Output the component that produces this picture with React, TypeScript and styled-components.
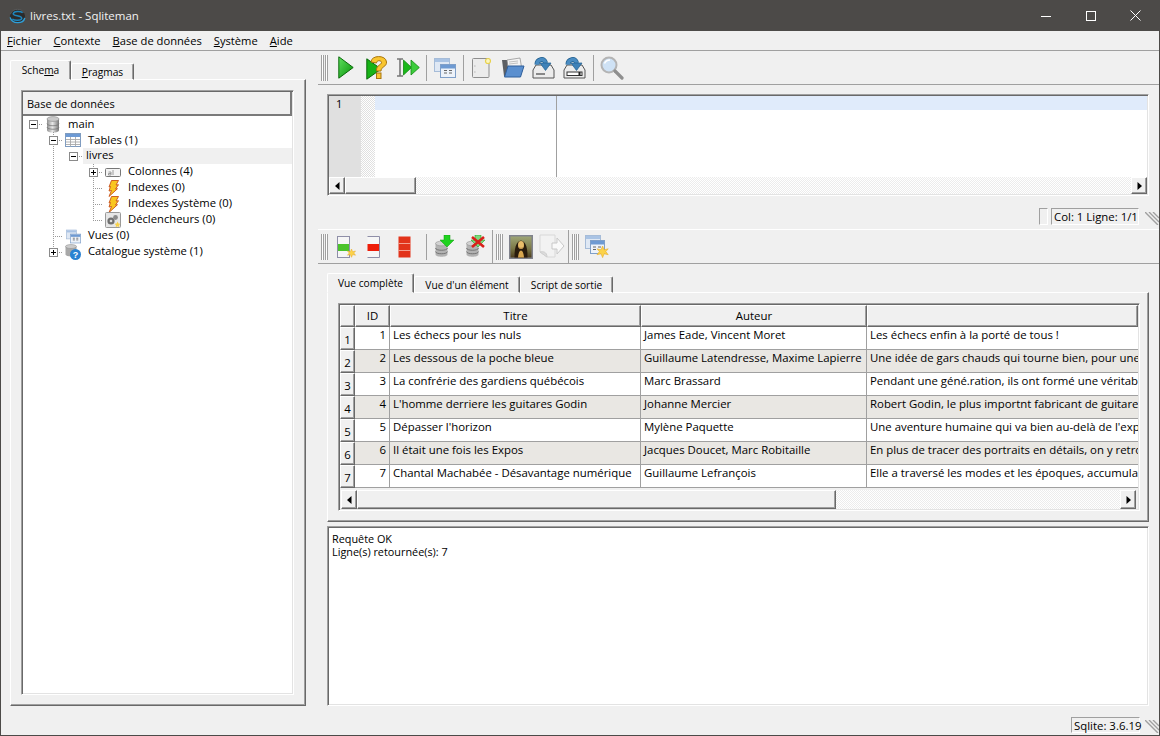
import React from 'react'
import styled, { createGlobalStyle } from 'styled-components'

const GlobalStyle = createGlobalStyle`
  html, body { margin: 0; padding: 0; background: #f0f0f0; }
  body { font-family: "Open Sans", "Noto Sans", "Liberation Sans", sans-serif; font-size: 11.4px; color: #000; }
`

const raised = `
  border: 1px solid;
  border-color: #fff #696969 #696969 #fff;
  box-shadow: inset -1px -1px 0 #a0a0a0;
`
const sunken = `
  border: 1px solid;
  border-color: #a0a0a0 #fff #fff #a0a0a0;
  box-shadow: inset 1px 1px 0 #696969, inset -1px -1px 0 #e3e3e3;
  padding: 1px;
`

const Window = styled.div`
  width: 1160px;
  height: 736px;
  box-sizing: border-box;
  border: 1px solid #4c4a48;
  border-top: 0;
  background: #f0f0f0;
  display: flex;
  flex-direction: column;
  overflow: hidden;
`
const TitleBar = styled.div`
  height: 31px;
  flex: none;
  margin: 0 -1px;
  background: #4c4a48;
  display: flex;
  align-items: center;
  padding: 0 2px 0 9px;
  color: #f2f2f2;
  font-size: 11.5px;
`
const TitleText = styled.span`
  flex: 1;
  margin-left: 4px;
`
const WinButton = styled.div`
  width: 45px;
  height: 31px;
  display: flex;
  align-items: center;
  justify-content: center;
`
const MenuBar = styled.div`
  height: 19px;
  flex: none;
  display: flex;
  align-items: center;
  gap: 12px;
  padding-left: 6px;
  border-bottom: 1px solid #a0a0a0;
  box-sizing: content-box;
  font-size: 11.2px;
`
const Main = styled.div`
  flex: 1;
  min-height: 0;
  display: grid;
  grid-template-columns: 317px 1fr;
`
const LeftColumn = styled.div`
  padding: 9px 12px 7px 9px;
  display: flex;
  flex-direction: column;
  min-height: 0;
`
const RightColumn = styled.div`
  display: flex;
  flex-direction: column;
  min-width: 0;
  padding-bottom: 7px;
`
const TabRow = styled.div`
  display: flex;
  height: 20px;
  flex: none;
  position: relative;
  z-index: 1;
  margin-bottom: -1px;
  align-items: flex-end;
`
const Tab = styled.div<{ $active?: boolean; $w: number }>`
  width: ${p => p.$w}px;
  height: ${p => (p.$active ? 20 : 17)}px;
  box-sizing: border-box;
  display: flex;
  align-items: center;
  justify-content: center;
  background: #f0f0f0;
  border: 1px solid;
  border-color: #fff #696969 ${p => (p.$active ? '#f0f0f0' : '#fff')} #fff;
  border-radius: 2px 2px 0 0;
  box-shadow: inset -1px 0 0 #a0a0a0;
  font-size: 10.2px;
`
const TabPane = styled.div`
  ${raised}
  flex: 1;
  min-height: 0;
  display: flex;
  flex-direction: column;
  background: #f0f0f0;
`
const TreePane = styled(TabPane)`
  padding: 10px 11px 10px 10px;
`
const TreeFrame = styled.div`
  ${sunken}
  flex: 1;
  min-height: 0;
  background: #fff;
`
const TreeHeader = styled.div`
  height: 24px;
  box-sizing: border-box;
  background: #f0f0f0;
  border-right: 2px solid #7a7a7a;
  border-bottom: 2px solid #7a7a7a;
  display: flex;
  align-items: center;
  padding-left: 4px;
  font-size: 11px;
`
const TreeRow = styled.div`
  height: 16px;
  display: flex;
  align-items: stretch;
`
const dots = (x: string, y: string, w: string, h: string, dir: string) =>
  `repeating-linear-gradient(${dir}, #9a9a9a 0 1px, transparent 1px 2px) ${x} ${y} / ${w} ${h} no-repeat`

const guideBg: Record<string, string> = {
  none: 'none',
  pipe: dots('10px', '0', '1px', '100%', 'to bottom'),
  tee: `${dots('10px', '0', '1px', '100%', 'to bottom')}, ${dots('10px', '8px', '10px', '1px', 'to right')}`,
  end: `${dots('10px', '0', '1px', '9px', 'to bottom')}, ${dots('10px', '8px', '10px', '1px', 'to right')}`,
  root: `${dots('10px', '8px', '10px', '1px', 'to right')}`,
}
const Guide = styled.div<{ $kind: string }>`
  width: 20px;
  flex: none;
  background: ${p => guideBg[p.$kind]};
  display: flex;
  align-items: center;
  justify-content: center;
  padding-right: 1px;
  box-sizing: border-box;
`
const Expander = styled.div`
  width: 9px;
  height: 9px;
  box-sizing: border-box;
  border: 1px solid #8a8a8a;
  background: #fff;
  display: flex;
  align-items: center;
  justify-content: center;
  margin-left: 1px;
`
const TreeIcon = styled.div`
  width: 20px;
  flex: none;
  display: flex;
  align-items: center;
  justify-content: center;
`
const TreeLabel = styled.div<{ $selected?: boolean; $low?: boolean }>`
  flex: ${p => (p.$selected ? 1 : 'none')};
  padding-left: ${p => (p.$selected ? 3 : 5)}px;
  padding-top: ${p => (p.$low ? 1 : 0)}px;
  line-height: 14px;
  background: ${p => (p.$selected ? '#f0f0f0' : 'transparent')};
  white-space: nowrap;
  font-size: 11.25px;
`
const Toolbar = styled.div`
  height: 33px;
  flex: none;
  display: flex;
  align-items: center;
  padding-left: 3px;
  border-bottom: 1px solid #a0a0a0;
`
const Toolbar2 = styled(Toolbar)`
  margin-top: 4px;
  border-top: 1px solid #fff;
`
const Grip = styled.div`
  width: 7px;
  height: 26px;
  flex: none;
  margin-right: 2px;
  background: linear-gradient(to right, #a0a0a0 0 1px, #fff 1px 2px, #a0a0a0 2px 3px, transparent 3px 4px, #a0a0a0 4px 5px, #fff 5px 6px, #a0a0a0 6px 7px);
`
const ToolSep = styled.div`
  width: 6px;
  flex: none;
  height: 26px;
  background: linear-gradient(#a0a0a0, #a0a0a0) 3px 0 / 1px 100% no-repeat;
`
const ToolBreak = styled.div`
  width: 1px;
  flex: none;
  align-self: stretch;
  margin: 0 3px 0 1px;
  background: #a0a0a0;
`
const ToolButton = styled.div`
  width: 31px;
  flex: none;
  display: flex;
  align-items: center;
  justify-content: center;
`
const Panel = styled.div`
  margin: 0 10px 0 9px;
`
const EditorFrame = styled(Panel)`
  ${sunken}
  margin-top: 9px;
  height: 102px;
  box-sizing: border-box;
  display: flex;
  flex-direction: column;
  background: #fff;
`
const EditorBody = styled.div`
  flex: 1;
  min-height: 0;
  display: flex;
`
const Gutter = styled.div`
  width: 32px;
  flex: none;
  box-sizing: border-box;
  background: #e0e0e0;
  padding: 0 0 0 7px;
  font-size: 11px;
  line-height: 15px;
`
const FoldMargin = styled.div`
  width: 14px;
  flex: none;
  background: repeating-conic-gradient(#e0e0e0 0 25%, #fff 0 50%) 0 0 / 2px 2px;
`
const EditorText = styled.div`
  flex: 1;
  background: linear-gradient(#e0ebfb, #e0ebfb) 0 0 / 100% 14px no-repeat, #fff;
  display: flex;
`
const EdgeLine = styled.div`
  width: 181px;
  border-right: 1px solid #a0a0a0;
`
const ScrollBar = styled.div`
  height: 17px;
  flex: none;
  display: flex;
  background: repeating-conic-gradient(#ececec 0 25%, #fff 0 50%) 0 0 / 2px 2px;
`
const ScrollButton = styled.div`
  ${raised}
  width: 16px;
  flex: none;
  box-sizing: border-box;
  background: #f0f0f0;
  display: flex;
  align-items: center;
  justify-content: center;
`
const ScrollThumb = styled.div<{ $w: number }>`
  ${raised}
  width: ${p => p.$w}px;
  flex: none;
  box-sizing: border-box;
  background: #f0f0f0;
`
const ScrollTrack = styled.div`
  flex: 1;
`
const EditorStatus = styled.div`
  height: 17px;
  flex: none;
  margin-top: 12px;
  display: flex;
  justify-content: flex-end;
  align-items: stretch;
  gap: 3px;
`
const StatusCell = styled.div<{ $w: number }>`
  width: ${p => p.$w}px;
  box-sizing: border-box;
  border: 1px solid;
  border-color: #a0a0a0 #fff #fff #a0a0a0;
  display: flex;
  align-items: center;
  padding-left: 2px;
  white-space: nowrap;
`
const SizeGrip = styled.div`
  margin-left: 3px;
  width: 14px;
  align-self: flex-end;
  display: flex;
`
const ResultTabs = styled(Panel)`
  margin-top: 9px;
  height: 249px;
  flex: none;
  display: flex;
  flex-direction: column;
`
const ResultPane = styled(TabPane)`
  padding: 10px 8px 10px 10px;
`
const TableFrame = styled.div`
  ${sunken}
  flex: 1;
  min-height: 0;
  display: flex;
  flex-direction: column;
  background: #f0f0f0;
`
const Grid = styled.div`
  display: grid;
  grid-template-columns: 15px 35px 251px 226px 1fr;
  grid-auto-rows: 23px;
  grid-template-rows: 22px;
  overflow: hidden;
  background: #fff;
`
const HeaderCell = styled.div`
  ${raised}
  box-sizing: border-box;
  background: #f0f0f0;
  display: flex;
  align-items: center;
  justify-content: center;
  padding-bottom: 2px;
`
const RowHead = styled(HeaderCell)`
  padding: 2px 0 0;
`
const Cell = styled.div<{ $alt?: boolean; $right?: boolean }>`
  box-sizing: border-box;
  background: ${p => (p.$alt ? '#e9e7e3' : '#fff')};
  border-right: 1px solid #a0a0a0;
  border-bottom: 1px solid #a0a0a0;
  padding: 0 3px;
  line-height: 16px;
  white-space: nowrap;
  overflow: hidden;
  text-align: ${p => (p.$right ? 'right' : 'left')};
`
const LastCell = styled(Cell)`
  border-right: 0;
`
const TableScroll = styled(ScrollBar)`
  height: 19px;
  margin: 2px 2px 0 1px;
`
const MessageBox = styled(Panel)`
  ${sunken}
  margin-top: 4px;
  flex: 1;
  min-height: 0;
  background: #fff;
  padding: 5px 4px;
  font-size: 10.85px;
  line-height: 13px;
`
const StatusBar = styled.div`
  height: 22px;
  flex: none;
  display: flex;
  justify-content: flex-end;
  padding: 4px 0 2px;
  box-sizing: border-box;
`
const BarGrip = styled(SizeGrip)`
  margin-left: 5px;
`

const Arrow = ({ left }: { left?: boolean }) => (
  <svg width="5" height="8" viewBox="0 0 5 8">
    <path d={left ? 'M4.500 0v8L0 4z' : 'M.5 0v8L5 4z'} fill="#000" />
  </svg>
)
const GripLines = () => (
  <svg width="14" height="13" viewBox="0 0 14 13">
    <path d="M0 0l13 13M4 0l10 10M8 0l6 6" stroke="#a0a0a0" strokeWidth="1.400" fill="none" />
  </svg>
)
const Logo = () => (
  <svg width="17" height="16" viewBox="0 0 18 16">
    <ellipse cx="9" cy="8" rx="8" ry="7" fill="#2b2b2b" />
    <path d="M1.200 9.500c1 4 4.500 5.600 8 5.600 3.400 0 6.600-1.600 7.600-5" stroke="#2f9fd8" strokeWidth="1.400" fill="none" />
    <path d="M14.500 4.500C12 2.500 5 2.800 4.500 5.500 4 8.500 13.500 7 13.500 10.500 13 13 6 13.300 3.500 11.200" stroke="#1f86bd" strokeWidth="1.600" fill="none" />
    <path d="M1.500 6C2.500 2.500 6 .9 9 .9s5.500 1.300 7 3.800" stroke="#5a5a5a" strokeWidth="1" fill="none" />
  </svg>
)
const Db = () => (
  <svg width="14" height="17" viewBox="0 0 14 17">
    <defs>
      <linearGradient id="dbg">
        <stop offset="0" stopColor="#8f8f8f" />
        <stop offset=".45" stopColor="#e8e8e8" />
        <stop offset="1" stopColor="#777" />
      </linearGradient>
    </defs>
    <path d="M1 3v11c0 3.500 12 3.500 12 0V3z" fill="url(#dbg)" />
    <ellipse cx="7" cy="3" rx="6" ry="2.400" fill="#c9c9c9" stroke="#8a8a8a" strokeWidth=".6" />
    <path d="M1 7.500c0 3 12 3 12 0M1 11c0 3 12 3 12 0" stroke="#777" strokeWidth=".8" fill="none" />
  </svg>
)
const TableGlyph = () => (
  <svg width="16" height="14" viewBox="0 0 16 14">
    <rect x=".5" y=".5" width="15" height="13" fill="#fff" stroke="#7f9cc0" />
    <rect x="1" y="1" width="14" height="3" fill="#6d9ad4" />
    <path d="M1 6.500h14M1 9h14M1 11.500h14M5.500 4v9.500M10.500 4v9.500" stroke="#a9a9a9" strokeWidth=".9" />
  </svg>
)
const ColumnsGlyph = () => (
  <svg width="16" height="9" viewBox="0 0 16 9">
    <rect x=".5" y=".5" width="15" height="8" rx="1" fill="#f4f4f4" stroke="#777" />
    <path d="M3.500 4h2.500v3H3.500v-1.500h2.500M8 2v5" stroke="#888" strokeWidth=".8" fill="none" />
  </svg>
)
const Bolt = () => (
  <svg width="11" height="17" viewBox="0 0 11 17">
    <path d="M3.500.5h7L8 5l2.500-.3-3 4.300 2-.3L1 16.500l2.500-6-2.500.5 1.500-4.500L1 7z" fill="#f9c61f" stroke="#c8501a" strokeWidth=".9" />
  </svg>
)
const Trigger = () => (
  <svg width="16" height="16" viewBox="0 0 16 16">
    <rect x=".5" y=".5" width="15" height="15" rx="1" fill="#e6e6e6" stroke="#999" />
    <circle cx="6" cy="9" r="3.600" fill="#6f6f6f" />
    <circle cx="6" cy="9" r="1.300" fill="#ddd" />
    <circle cx="10.500" cy="5.500" r="2.400" fill="#8a8a8a" />
    <path d="M12.500 9.500l1 2 2 .3-1.500 1.500.4 2-1.900-1-1.800 1 .3-2-1.400-1.500 2-.3z" fill="#f8d24a" />
  </svg>
)
const ViewGlyph = ({ s = 15 }: { s?: number }) => (
  <svg width={s} height={s} viewBox="0 0 22 20">
    <rect x=".5" y=".5" width="15" height="13" fill="#dfe8f4" stroke="#a6bcd8" />
    <rect x="1" y="1" width="14" height="3" fill="#a9c3e4" />
    <rect x="6.500" y="6.500" width="15" height="13" fill="#edf2f9" stroke="#7f9fc8" />
    <rect x="7" y="7" width="14" height="3.500" fill="#6e9ad2" />
    <path d="M10 12.500h3M15 12.500h3M10 15h3M15 15h3" stroke="#666" strokeWidth="1.200" />
  </svg>
)
const CatalogGlyph = () => (
  <svg width="16" height="16" viewBox="0 0 16 16">
    <path d="M.5 2.500v8c0 2.500 11 2.500 11 0v-8z" fill="#a8a8a8" />
    <ellipse cx="6" cy="2.500" rx="5.500" ry="2" fill="#ccc" stroke="#888" strokeWidth=".5" />
    <circle cx="10.500" cy="10.500" r="5.500" fill="#2a82d2" />
    <text x="10.500" y="14" fontSize="9" fontWeight="bold" textAnchor="middle" fill="#fff" fontFamily="Liberation Sans">?</text>
  </svg>
)
const Play = () => (
  <svg width="16" height="23" viewBox="0 0 16 23">
    <defs>
      <linearGradient id="pg" x1="0" x2="1" y1="0" y2="1">
        <stop offset="0" stopColor="#5fe05f" />
        <stop offset="1" stopColor="#069006" />
      </linearGradient>
    </defs>
    <path d="M.8.800l14.400 10.700L.8 22.200z" fill="url(#pg)" stroke="#0a6a0a" strokeWidth="1" />
  </svg>
)
const Explain = () => (
  <svg width="22" height="24" viewBox="0 0 22 24">
    <path d="M.8 2.800l14.400 10.200L.8 23.200z" fill="#17b317" stroke="#0a6a0a" />
    <path d="M5 6c0-7 15-7.500 15.500 0 .3 5-5.500 4.500-5.500 9h-4.500c-.5-6 5-6 5-8.500 0-2.500-5-2.500-5 .5z" fill="#f8c52f" stroke="#a8750e" />
    <rect x="10.500" y="17" width="4.500" height="5.500" fill="#f8c52f" stroke="#a8750e" />
  </svg>
)
const RunScript = () => (
  <svg width="24" height="19" viewBox="0 0 24 19">
    <path d="M1 1h6M1 18h6M4 1v17" stroke="#777" strokeWidth="1.600" fill="none" />
    <path d="M7.500 2l8 7.500-8 7.500z" fill="#19b819" stroke="#128a12" strokeWidth=".8" />
    <path d="M15 2l8.300 7.500L15 17z" fill="#3ccc3c" stroke="#128a12" strokeWidth=".8" />
  </svg>
)
const NewFile = () => (
  <svg width="19" height="21" viewBox="0 0 19 21">
    <rect x=".5" y="1.500" width="16.500" height="19" rx="1" fill="#ececec" stroke="#8e8e8e" />
    <circle cx="16" cy="4" r="2.500" fill="#fbf6c0" stroke="#e8d24e" strokeWidth="1.200" />
    <path d="M2.500 9h.8M2.500 15h.8" stroke="#888" />
  </svg>
)
const OpenFolder = () => (
  <svg width="24" height="21" viewBox="0 0 24 21">
    <path d="M1 3h5l2 2h2v14H3z" fill="#5c5f63" />
    <path d="M6 3l13-2 1.500 9H7z" fill="#f4f4f4" stroke="#888" strokeWidth=".7" />
    <path d="M8 5l9-1M8 7l9-1" stroke="#aaa" strokeWidth=".7" />
    <path d="M3.500 20L7 9h16l-3.500 11z" fill="#5a8fcf" stroke="#2f5f9b" />
  </svg>
)
const SaveAs = ({ slot }: { slot?: boolean }) => (
  <svg width="23" height="23" viewBox="0 0 23 23">
    <path d="M1 14l3-5h15l3 5v8H1z" fill="#ececec" stroke="#555" />
    {slot ? (
      <rect x="4" y="16" width="15" height="3.500" fill="#fff" stroke="#333" />
    ) : (
      <path d="M4 18h9" stroke="#888" strokeWidth="2" />
    )}
    {slot && <rect x="15.500" y="16" width="2" height="3.500" fill="#222" />}
    <path d="M5 8.500C5 3.500 12.500 1 13.500 7" fill="none" stroke="#1f5f8f" strokeWidth="5" />
    <path d="M5 8.500C5 3.500 12.500 1 13.500 7" fill="none" stroke="#4a8cc2" strokeWidth="3.600" />
    <path d="M8 7h11l-5.500 7.500z" fill="#3f82b8" stroke="#1f5f8f" strokeWidth=".7" />
  </svg>
)
const Magnifier = () => (
  <svg width="24" height="24" viewBox="0 0 24 24">
    <circle cx="9" cy="9" r="7.500" fill="#cfe2f5" stroke="#b4b4b4" strokeWidth="2" />
    <path d="M4.500 7.500c1-2.500 3-3.500 5.500-3.500" stroke="#fff" strokeWidth="1.500" fill="none" />
    <path d="M15 15l7 7" stroke="#8f8f8f" strokeWidth="3.200" strokeLinecap="round" />
  </svg>
)
const burstPath = 'M4 0l1.100 2.700L8 2 6.300 4 8 6.200l-2.900-.6L4 8.300 2.900 5.600 0 6.200 1.700 4 0 2l2.900.7z'
const TableNew = () => (
  <svg width="24" height="22" viewBox="0 0 24 22">
    <rect x="3.500" y=".5" width="12" height="21" fill="#f6f6f6" stroke="#8f8fa8" />
    <rect x="4" y="8" width="11" height="7" fill="#4cc42c" />
    <path transform="translate(13.500 13)" d={burstPath} fill="#fcd34a" stroke="#e8a820" strokeWidth=".5" />
  </svg>
)
const TableRed = () => (
  <svg width="24" height="22" viewBox="0 0 24 22">
    <path d="M2.500.5h12v21h-12" fill="#f6f6f6" stroke="#8f8fa8" />
    <rect x="2.500" y="8" width="11.500" height="7" fill="#ee1e0a" />
  </svg>
)
const TableDrop = () => (
  <svg width="24" height="22" viewBox="0 0 24 22">
    <rect x="2.500" y=".5" width="12" height="21" fill="#e2331a" />
    <path d="M2.500 7.500h12M2.500 14.500h12" stroke="#f4a090" />
  </svg>
)
const DbAdd = ({ remove }: { remove?: boolean }) => (
  <svg width="20" height="23" viewBox="0 0 20 23">
    <g transform="translate(0 6)">
      <path d="M.5 2.500v11c0 3 12 3 12 0v-11z" fill="#b2b2b2" />
      <ellipse cx="6.500" cy="2.500" rx="6" ry="2.300" fill="#d2d2d2" stroke="#888" strokeWidth=".5" />
      <path d="M.5 7c0 3 12 3 12 0M.5 10.500c0 3 12 3 12 0" stroke="#666" strokeWidth=".8" fill="none" />
    </g>
    <path d="M9 0h6v5h4l-7 7-7-7h4z" fill={remove ? '#7dd87d' : '#1fd21f'} stroke="#0f9a0f" strokeWidth=".5" />
    {remove && <path d="M6 2l12 10M18 2L6 12" stroke="#d8201a" strokeWidth="2.600" />}
  </svg>
)
const MonaLisa = () => (
  <svg width="24" height="24" viewBox="0 0 24 24">
    <defs>
      <filter id="soft"><feGaussianBlur stdDeviation=".45" /></filter>
      <linearGradient id="bgm" x1="0" x2="0" y1="0" y2="1">
        <stop offset="0" stopColor="#9fa878" />
        <stop offset=".55" stopColor="#7d7a48" />
        <stop offset="1" stopColor="#4b3a1c" />
      </linearGradient>
    </defs>
    <rect x=".75" y=".75" width="22.500" height="22.500" fill="url(#bgm)" stroke="#80828c" strokeWidth="1.500" />
    <g filter="url(#soft)">
      <path d="M5.500 22.500c0-9 1-15.500 6.500-17 5.500 1.500 6.500 8 6.500 17z" fill="#2b1d10" />
      <ellipse cx="12" cy="10" rx="3" ry="4" fill="#e8bd6a" />
      <path d="M9 22.500c.4-4.500 1.500-7 3-7s2.600 2.500 3 7z" fill="#d8a650" />
      <path d="M10 12.700c1.300.7 2.700.7 4 0" stroke="#8a5a20" strokeWidth=".5" fill="none" />
    </g>
  </svg>
)
const FileArrow = () => (
  <svg width="26" height="25" viewBox="0 0 26 25">
    <path d="M1 1h15v22H8l-7-5z" fill="#f2f2f2" stroke="#d8d8d8" />
    <path d="M13 9h5V4l7 8-7 8v-5h-5z" fill="#fafafa" stroke="#c8c8c8" />
    <path d="M1 18c3-1 7 0 7 5z" fill="#dcdcdc" stroke="#cfcfcf" />
  </svg>
)
const ViewNew = () => (
  <svg width="24" height="23" viewBox="0 0 24 23">
    <rect x=".5" y=".5" width="15" height="13" fill="#dfe8f4" stroke="#a6bcd8" />
    <rect x="1" y="1" width="14" height="3" fill="#a9c3e4" />
    <rect x="5.500" y="5.500" width="14" height="13" fill="#edf2f9" stroke="#7f9fc8" />
    <rect x="6" y="6" width="13" height="3.500" fill="#6e9ad2" />
    <path d="M8 12h3M13 12h3M8 14.500h3" stroke="#666" strokeWidth="1.200" />
    <path transform="translate(12 11) scale(1.400)" d={burstPath} fill="#fcd34a" stroke="#e8a820" strokeWidth=".4" />
  </svg>
)
const Minus = () => (
  <svg width="7" height="7" viewBox="0 0 7 7"><path d="M1 3.500h5" stroke="#000" /></svg>
)
const Plus = () => (
  <svg width="7" height="7" viewBox="0 0 7 7"><path d="M1 3.500h5M3.500 1v5" stroke="#000" /></svg>
)

type Row = { id: number; titre: string; auteur: string; desc: string }
const rows: Row[] = [
  { id: 1, titre: 'Les échecs pour les nuls', auteur: 'James Eade, Vincent Moret', desc: 'Les échecs enfin à la porté de tous !' },
  { id: 2, titre: 'Les dessous de la poche bleue', auteur: 'Guillaume Latendresse, Maxime Lapierre', desc: 'Une idée de gars chauds qui tourne bien, pour une' },
  { id: 3, titre: 'La confrérie des gardiens québécois', auteur: 'Marc Brassard', desc: 'Pendant une géné.ration, ils ont formé une véritable' },
  { id: 4, titre: "L'homme derriere les guitares Godin", auteur: 'Johanne Mercier', desc: 'Robert Godin, le plus importnt fabricant de guitares' },
  { id: 5, titre: "Dépasser l'horizon", auteur: 'Mylène Paquette', desc: "Une aventure humaine qui va bien au-delà de l'expl" },
  { id: 6, titre: 'Il était une fois les Expos', auteur: 'Jacques Doucet, Marc Robitaille', desc: 'En plus de tracer des portraits en détails, on y retrouve' },
  { id: 7, titre: 'Chantal Machabée - Désavantage numérique', auteur: 'Guillaume Lefrançois', desc: 'Elle a traversé les modes et les époques, accumulant' },
]

export default function App() {
  return (
    <Window>
      <GlobalStyle />
      <TitleBar>
        <Logo />
        <TitleText>livres.txt - Sqliteman</TitleText>
        <WinButton>
          <svg width="10" height="10" viewBox="0 0 10 10"><path d="M0 5.500h10" stroke="#fff" /></svg>
        </WinButton>
        <WinButton>
          <svg width="10" height="10" viewBox="0 0 10 10"><rect x=".5" y=".5" width="9" height="9" fill="none" stroke="#fff" /></svg>
        </WinButton>
        <WinButton>
          <svg width="11" height="11" viewBox="0 0 11 11"><path d="M.5.500l10 10M10.500.500l-10 10" stroke="#fff" /></svg>
        </WinButton>
      </TitleBar>
      <MenuBar>
        <span><u>F</u>ichier</span>
        <span><u>C</u>ontexte</span>
        <span><u>B</u>ase de données</span>
        <span><u>S</u>ystème</span>
        <span><u>A</u>ide</span>
      </MenuBar>
      <Main>
        <LeftColumn>
          <TabRow>
            <Tab $active $w={61}><span>Sche<u>m</u>a</span></Tab>
            <Tab $w={63}><span><u>P</u>ragmas</span></Tab>
          </TabRow>
          <TreePane>
            <TreeFrame>
              <TreeHeader>Base de données</TreeHeader>
              <TreeRow>
                <Guide $kind="root"><Expander><Minus /></Expander></Guide>
                <TreeIcon><Db /></TreeIcon>
                <TreeLabel $low>main</TreeLabel>
              </TreeRow>
              <TreeRow>
                <Guide $kind="none" />
                <Guide $kind="tee"><Expander><Minus /></Expander></Guide>
                <TreeIcon><TableGlyph /></TreeIcon>
                <TreeLabel $low>Tables (1)</TreeLabel>
              </TreeRow>
              <TreeRow>
                <Guide $kind="none" />
                <Guide $kind="pipe" />
                <Guide $kind="root"><Expander><Minus /></Expander></Guide>
                <TreeLabel $selected>livres</TreeLabel>
              </TreeRow>
              <TreeRow>
                <Guide $kind="none" />
                <Guide $kind="pipe" />
                <Guide $kind="none" />
                <Guide $kind="tee"><Expander><Plus /></Expander></Guide>
                <TreeIcon><ColumnsGlyph /></TreeIcon>
                <TreeLabel>Colonnes (4)</TreeLabel>
              </TreeRow>
              <TreeRow>
                <Guide $kind="none" />
                <Guide $kind="pipe" />
                <Guide $kind="none" />
                <Guide $kind="tee" />
                <TreeIcon><Bolt /></TreeIcon>
                <TreeLabel>Indexes (0)</TreeLabel>
              </TreeRow>
              <TreeRow>
                <Guide $kind="none" />
                <Guide $kind="pipe" />
                <Guide $kind="none" />
                <Guide $kind="tee" />
                <TreeIcon><Bolt /></TreeIcon>
                <TreeLabel>Indexes Système (0)</TreeLabel>
              </TreeRow>
              <TreeRow>
                <Guide $kind="none" />
                <Guide $kind="pipe" />
                <Guide $kind="none" />
                <Guide $kind="end" />
                <TreeIcon><Trigger /></TreeIcon>
                <TreeLabel>Déclencheurs (0)</TreeLabel>
              </TreeRow>
              <TreeRow>
                <Guide $kind="none" />
                <Guide $kind="tee" />
                <TreeIcon><ViewGlyph /></TreeIcon>
                <TreeLabel>Vues (0)</TreeLabel>
              </TreeRow>
              <TreeRow>
                <Guide $kind="none" />
                <Guide $kind="end"><Expander><Plus /></Expander></Guide>
                <TreeIcon><CatalogGlyph /></TreeIcon>
                <TreeLabel>Catalogue système (1)</TreeLabel>
              </TreeRow>
            </TreeFrame>
          </TreePane>
        </LeftColumn>
        <RightColumn>
          <Toolbar>
            <Grip />
            <ToolButton><Play /></ToolButton>
            <ToolButton><Explain /></ToolButton>
            <ToolButton><RunScript /></ToolButton>
            <ToolSep />
            <ToolButton><ViewGlyph s={22} /></ToolButton>
            <ToolSep />
            <ToolButton><NewFile /></ToolButton>
            <ToolButton><OpenFolder /></ToolButton>
            <ToolButton><SaveAs /></ToolButton>
            <ToolButton><SaveAs slot /></ToolButton>
            <ToolSep />
            <ToolButton><Magnifier /></ToolButton>
          </Toolbar>
          <EditorFrame>
            <EditorBody>
              <Gutter>1</Gutter>
              <FoldMargin />
              <EditorText><EdgeLine /></EditorText>
            </EditorBody>
            <ScrollBar>
              <ScrollButton><Arrow left /></ScrollButton>
              <ScrollThumb $w={71} />
              <ScrollTrack />
              <ScrollButton><Arrow /></ScrollButton>
            </ScrollBar>
          </EditorFrame>
          <EditorStatus>
            <StatusCell $w={9} />
            <StatusCell $w={88}>Col: 1 Ligne: 1/1</StatusCell>
            <SizeGrip><GripLines /></SizeGrip>
          </EditorStatus>
          <Toolbar2>
            <Grip />
            <ToolButton><TableNew /></ToolButton>
            <ToolButton><TableRed /></ToolButton>
            <ToolButton><TableDrop /></ToolButton>
            <ToolSep />
            <ToolButton><DbAdd /></ToolButton>
            <ToolButton><DbAdd remove /></ToolButton>
            <ToolBreak />
            <Grip />
            <ToolButton><MonaLisa /></ToolButton>
            <ToolButton><FileArrow /></ToolButton>
            <ToolBreak />
            <Grip />
            <ToolButton><ViewNew /></ToolButton>
          </Toolbar2>
          <ResultTabs>
            <TabRow>
              <Tab $active $w={87}>Vue complète</Tab>
              <Tab $w={106}>Vue d'un élément</Tab>
              <Tab $w={93}>Script de sortie</Tab>
            </TabRow>
            <ResultPane>
              <TableFrame>
                <Grid>
                  <HeaderCell />
                  <HeaderCell>ID</HeaderCell>
                  <HeaderCell>Titre</HeaderCell>
                  <HeaderCell>Auteur</HeaderCell>
                  <HeaderCell />
                  {rows.map((r, i) => (
                    <React.Fragment key={r.id}>
                      <RowHead>{r.id}</RowHead>
                      <Cell $alt={i % 2 === 1} $right>{r.id}</Cell>
                      <Cell $alt={i % 2 === 1}>{r.titre}</Cell>
                      <Cell $alt={i % 2 === 1}>{r.auteur}</Cell>
                      <LastCell $alt={i % 2 === 1}>{r.desc}</LastCell>
                    </React.Fragment>
                  ))}
                </Grid>
                <TableScroll>
                  <ScrollButton><Arrow left /></ScrollButton>
                  <ScrollThumb $w={479} />
                  <ScrollTrack />
                  <ScrollButton><Arrow /></ScrollButton>
                </TableScroll>
              </TableFrame>
            </ResultPane>
          </ResultTabs>
          <MessageBox>
            Requête OK
            <br />
            Ligne(s) retournée(s): 7
          </MessageBox>
        </RightColumn>
      </Main>
      <StatusBar>
        <StatusCell $w={69}>Sqlite: 3.6.19</StatusCell>
        <BarGrip><GripLines /></BarGrip>
      </StatusBar>
    </Window>
  )
}
